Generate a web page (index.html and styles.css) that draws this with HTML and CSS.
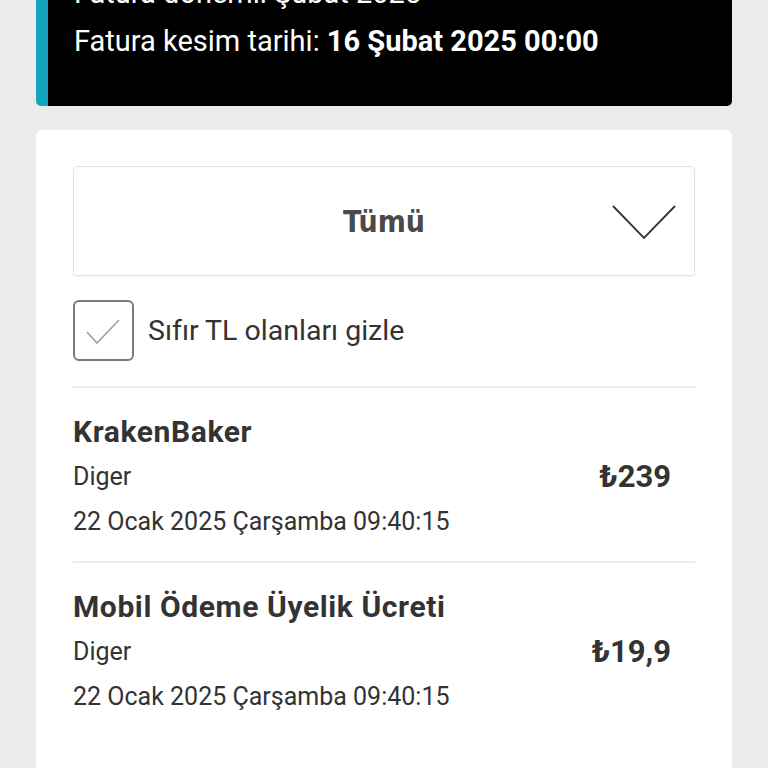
FILE: index.html
```html
<!DOCTYPE html>
<html lang="tr">
<head>
<meta charset="utf-8">
<title>Fatura</title>
<link rel="stylesheet" href="styles.css">
</head>
<body>
<div class="page">
  <div class="banner">
    <div class="banner-line">Fatura dönemi: Şubat 2025</div>
    <div class="banner-line">Fatura kesim tarihi: <b>16 Şubat 2025 00:00</b></div>
  </div>
  <div class="card">
    <div class="select">
      <span class="select-label">Tümü</span>
      <svg class="chevron" width="64" height="36" viewBox="0 0 64 36"><polyline points="1,1 32,33 63,1" fill="none" stroke="#333" stroke-width="1.8"/></svg>
    </div>
    <label class="check-row">
      <span class="checkbox">
        <svg width="61" height="61" viewBox="0 0 61 61"><polyline points="14,32 24,43 46,20" fill="none" stroke="#a0a0a0" stroke-width="1.6"/></svg>
      </span>
      <span class="check-label">Sıfır TL olanları gizle</span>
    </label>
    <div class="item">
      <div class="item-info">
        <div class="item-title">KrakenBaker</div>
        <div class="item-type">Diger</div>
        <div class="item-date">22 Ocak 2025 Çarşamba 09:40:15</div>
      </div>
      <div class="item-price">₺239</div>
    </div>
    <div class="item">
      <div class="item-info">
        <div class="item-title">Mobil Ödeme Üyelik Ücreti</div>
        <div class="item-type">Diger</div>
        <div class="item-date">22 Ocak 2025 Çarşamba 09:40:15</div>
      </div>
      <div class="item-price">₺19,9</div>
    </div>
  </div>
</div>
</body>
</html>
```
FILE: styles.css
```css
html, body {
  margin: 0;
  padding: 0;
  background: #ebebeb;
  height: 100%;
  overflow: hidden;
}
body {
  font-family: Roboto, "Noto Sans", sans-serif;
  color: #333;
}
.page {
  padding: 0 36px;
}
.banner {
  margin-top: -51px;
  background: #000;
  border-left: 12px solid #15a4bd;
  border-radius: 0 0 5px 5px;
  padding: 20px 0 41px 26px;
  color: #fff;
}
.banner-line {
  font-size: 29px;
  line-height: 48px;
}
.banner-line b {
  font-weight: 700;
}
.card {
  margin-top: 24px;
  background: #fff;
  border-radius: 6px;
  padding: 36px 37px 40px;
  min-height: 700px;
}
.select {
  height: 108px;
  border: 1px solid #e4e4e4;
  border-radius: 4px;
  box-shadow: 0 1px 2px rgba(0,0,0,0.05);
  display: flex;
  align-items: center;
  justify-content: center;
  position: relative;
}
.select-label {
  font-family: "DejaVu Sans Condensed", "DejaVu Sans", sans-serif;
  font-weight: 700;
  font-size: 30px;
  color: #4a4a4a;
}
.chevron {
  position: absolute;
  right: 18px;
  top: 38px;
}
.check-row {
  display: flex;
  align-items: center;
  gap: 14px;
  margin-top: 24px;
  padding-bottom: 25px;
  border-bottom: 2px solid #ececec;
}
.checkbox {
  width: 57px;
  height: 57px;
  border: 2px solid #7a7a7a;
  border-radius: 6px;
  display: block;
  position: relative;
}
.checkbox svg {
  position: absolute;
  left: -2px;
  top: -2px;
}
.check-label {
  font-size: 28.5px;
}
.item {
  display: flex;
  align-items: center;
  justify-content: space-between;
  padding: 21px 24px 17px 0;
  border-bottom: 2px solid #ececec;
}
.item:last-child {
  border-bottom: none;
}
.item-title {
  font-size: 30px;
  font-weight: 700;
  line-height: 45px;
  letter-spacing: 0.6px;
}
.item-type, .item-date {
  font-size: 25px;
  line-height: 45px;
}
.item-price {
  font-size: 31px;
  font-weight: 700;
}
```
